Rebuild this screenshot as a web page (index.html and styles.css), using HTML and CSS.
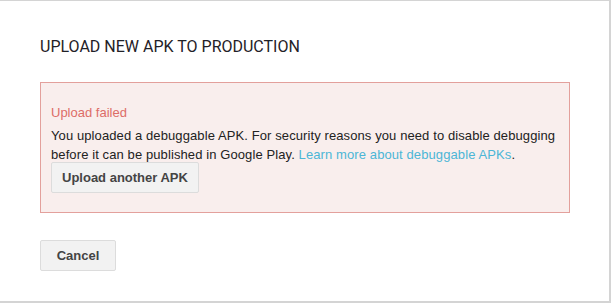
FILE: index.html
```html
<!DOCTYPE html>
<html lang="en">
<head>
  <meta charset="UTF-8">
  <title>Upload new APK to production</title>
  <link rel="stylesheet" href="styles.css">
</head>
<body>

  <!-- Dialog -->
  <div class="dialog">
    <h2 class="dialog-title">UPLOAD NEW APK TO PRODUCTION</h2>

    <div class="error-box">
      <p class="error-title">Upload failed</p>
      <p class="error-text">
        You uploaded a debuggable APK. For security reasons you need to disable debugging
        before it can be published in Google Play. <a href="#" class="link">Learn more about debuggable APKs</a>.
      </p>
      <button type="button" class="btn btn-retry">Upload another APK</button>
    </div>

    <div class="dialog-actions">
      <button type="button" class="btn">Cancel</button>
    </div>
  </div>

</body>
</html>
```

FILE: styles.css
```css
/* Page */
body {
  margin: 0;
  background-color: #ffffff;
  font-family: Arial, "Liberation Sans", sans-serif;
  font-size: 13px;
  color: #222;
}

.dialog {
  box-sizing: border-box;
  width: 611px;
  height: 303px;
  padding: 34px 40px 0 40px;
  border-top: 1px solid #d4d4d4;
  border-right: 2px solid #d4d4d4;
  border-bottom: 2px solid #d4d4d4;
  background-color: #ffffff;
}

.dialog-title {
  margin: 0 0 23px 0;
  font-family: Roboto, "Liberation Sans", sans-serif;
  font-size: 16px;
  font-weight: normal;
  line-height: 24px;
  color: #1f2127;
}

/* Error box */
.error-box {
  width: 530px;
  box-sizing: border-box;
  padding: 20px 10px 19px 10px;
  border: 1px solid #e3a09c;
  background-color: #f9eeed;
}

.error-title {
  margin: 0 0 4px 0;
  line-height: 19px;
  color: #dd6c67;
}

.error-text {
  margin: 0;
  line-height: 19px;
  letter-spacing: 0.1px;
  color: #222;
}

.link {
  color: #4cb6d6;
  text-decoration: none;
}

/* Buttons */
.btn {
  box-sizing: border-box;
  min-width: 76px;
  height: 31px;
  padding: 0 10px;
  font-family: Arial, "Liberation Sans", sans-serif;
  font-size: 13px;
  font-weight: bold;
  color: #444;
  background-color: #f2f2f2;
  border: 1px solid #dcdcdc;
  border-radius: 2px;
  cursor: pointer;
}

.btn-retry {
  display: block;
  margin-top: -2px;
}

.dialog-actions {
  margin-top: 27px;
}
```
